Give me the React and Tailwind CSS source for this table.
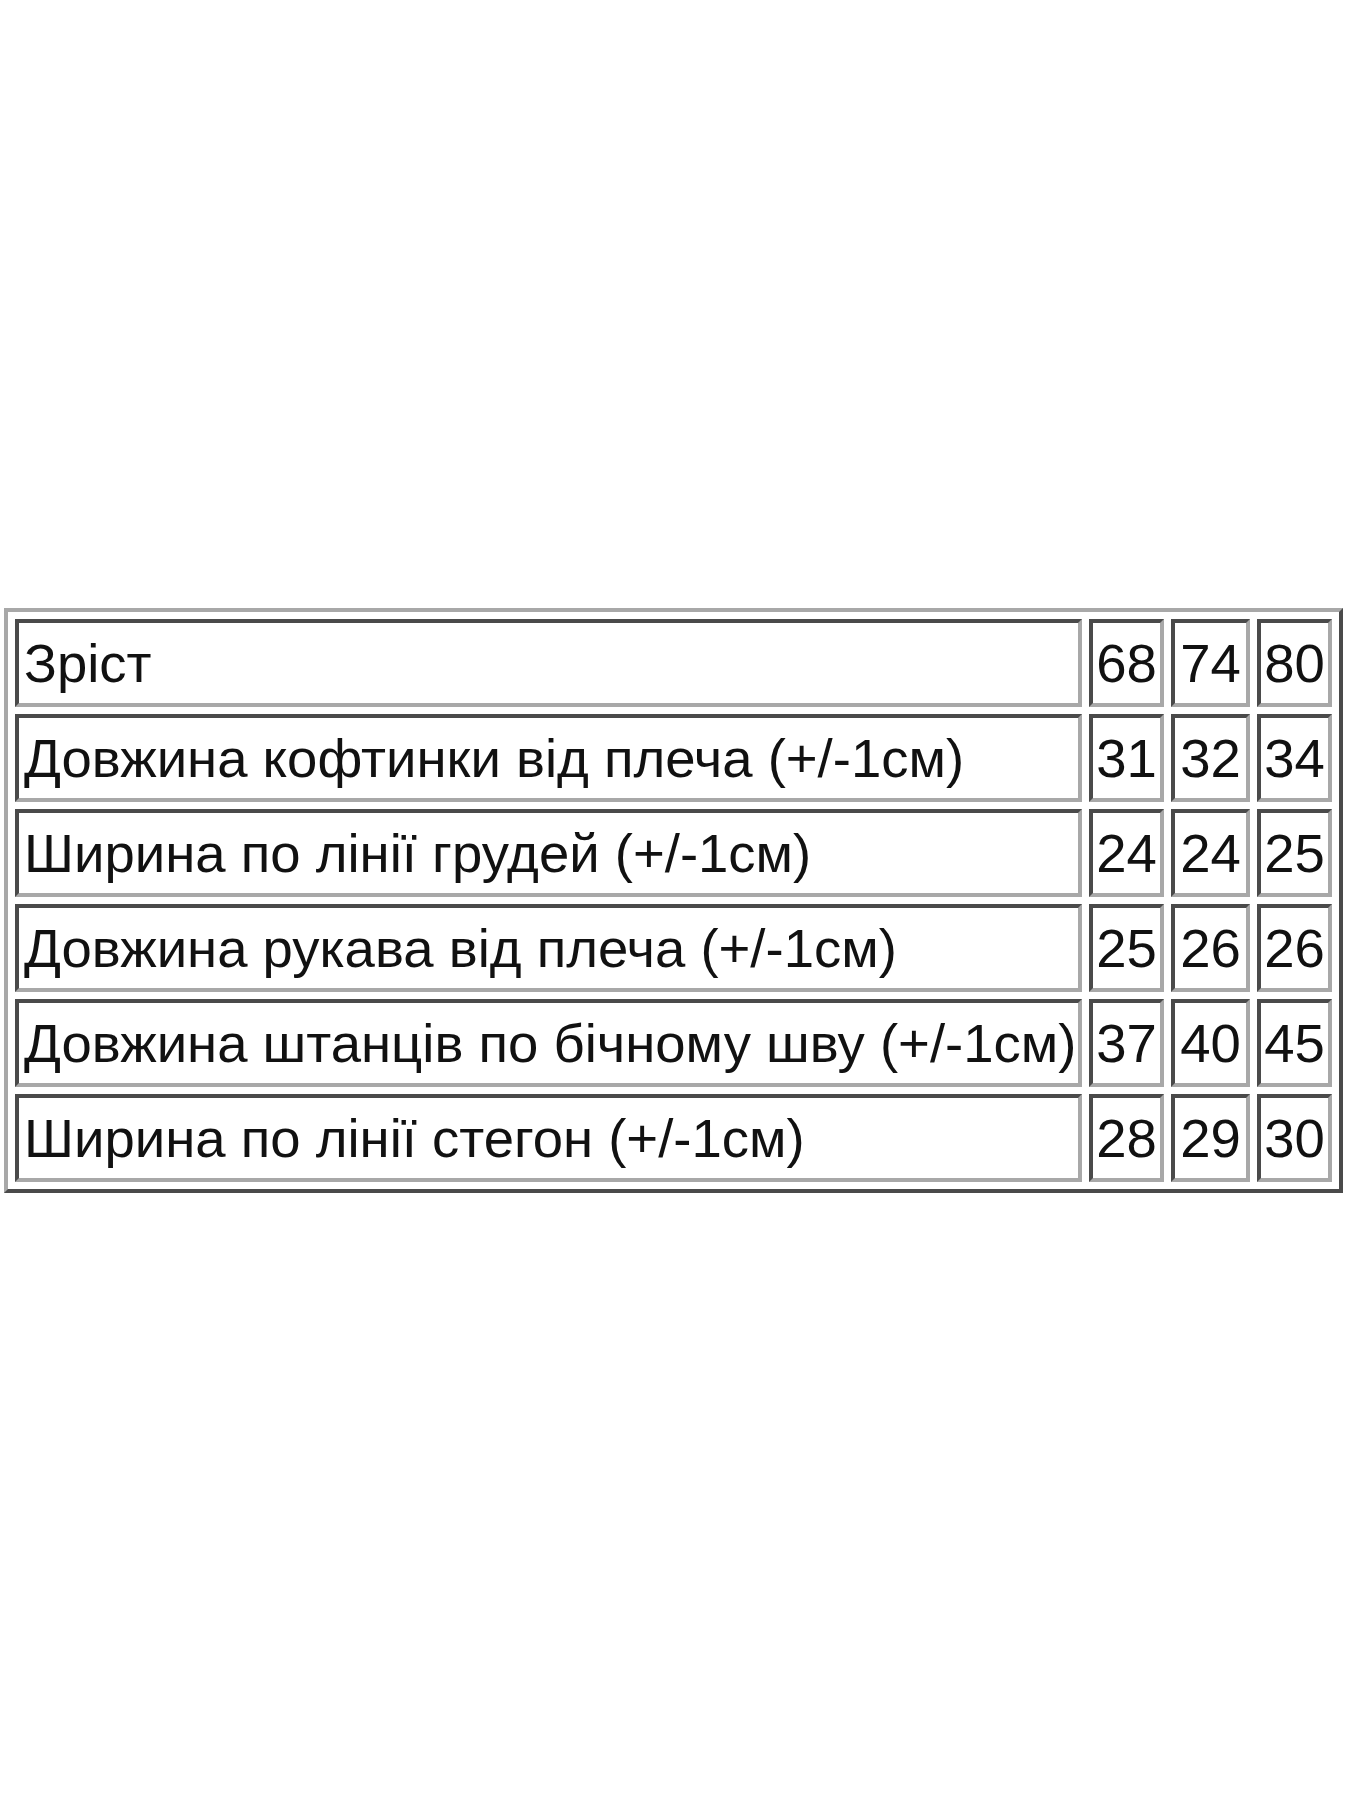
import React from 'react';

const rows = [
  { label: 'Зріст', values: ['68', '74', '80'] },
  { label: 'Довжина кофтинки від плеча (+/-1см)', values: ['31', '32', '34'] },
  { label: 'Ширина по лінії грудей (+/-1см)', values: ['24', '24', '25'] },
  { label: 'Довжина рукава від плеча (+/-1см)', values: ['25', '26', '26'] },
  { label: 'Довжина штанців по бічному шву (+/-1см)', values: ['37', '40', '45'] },
  { label: 'Ширина по лінії стегон (+/-1см)', values: ['28', '29', '30'] },
];

const cell =
  'h-[88px] border-4 border-t-[#4a4a4a] border-l-[#4a4a4a] border-r-[#a8a8a8] border-b-[#a8a8a8] p-0 pt-[3px] align-middle';

export default function App() {
  return (
    <div className="min-h-[1800px] bg-white pt-[608px] pl-[4px] font-['Liberation_Sans',Arial,sans-serif] text-[54.5px] leading-none text-[#111]">
      <table className="table-fixed border-separate border-spacing-[7px] border-4 border-t-[#a8a8a8] border-l-[#a8a8a8] border-r-[#4a4a4a] border-b-[#4a4a4a]">
        <colgroup>
          <col className="w-[1067px]" />
          <col className="w-[75px]" />
          <col className="w-[79px]" />
          <col className="w-[75px]" />
        </colgroup>
        <tbody>
          {rows.map((row) => (
            <tr key={row.label}>
              <td className={`${cell} pl-[5px] whitespace-nowrap`}>{row.label}</td>
              {row.values.map((v, i) => (
                <td key={i} className={`${cell} text-center`}>
                  {v}
                </td>
              ))}
            </tr>
          ))}
        </tbody>
      </table>
    </div>
  );
}
